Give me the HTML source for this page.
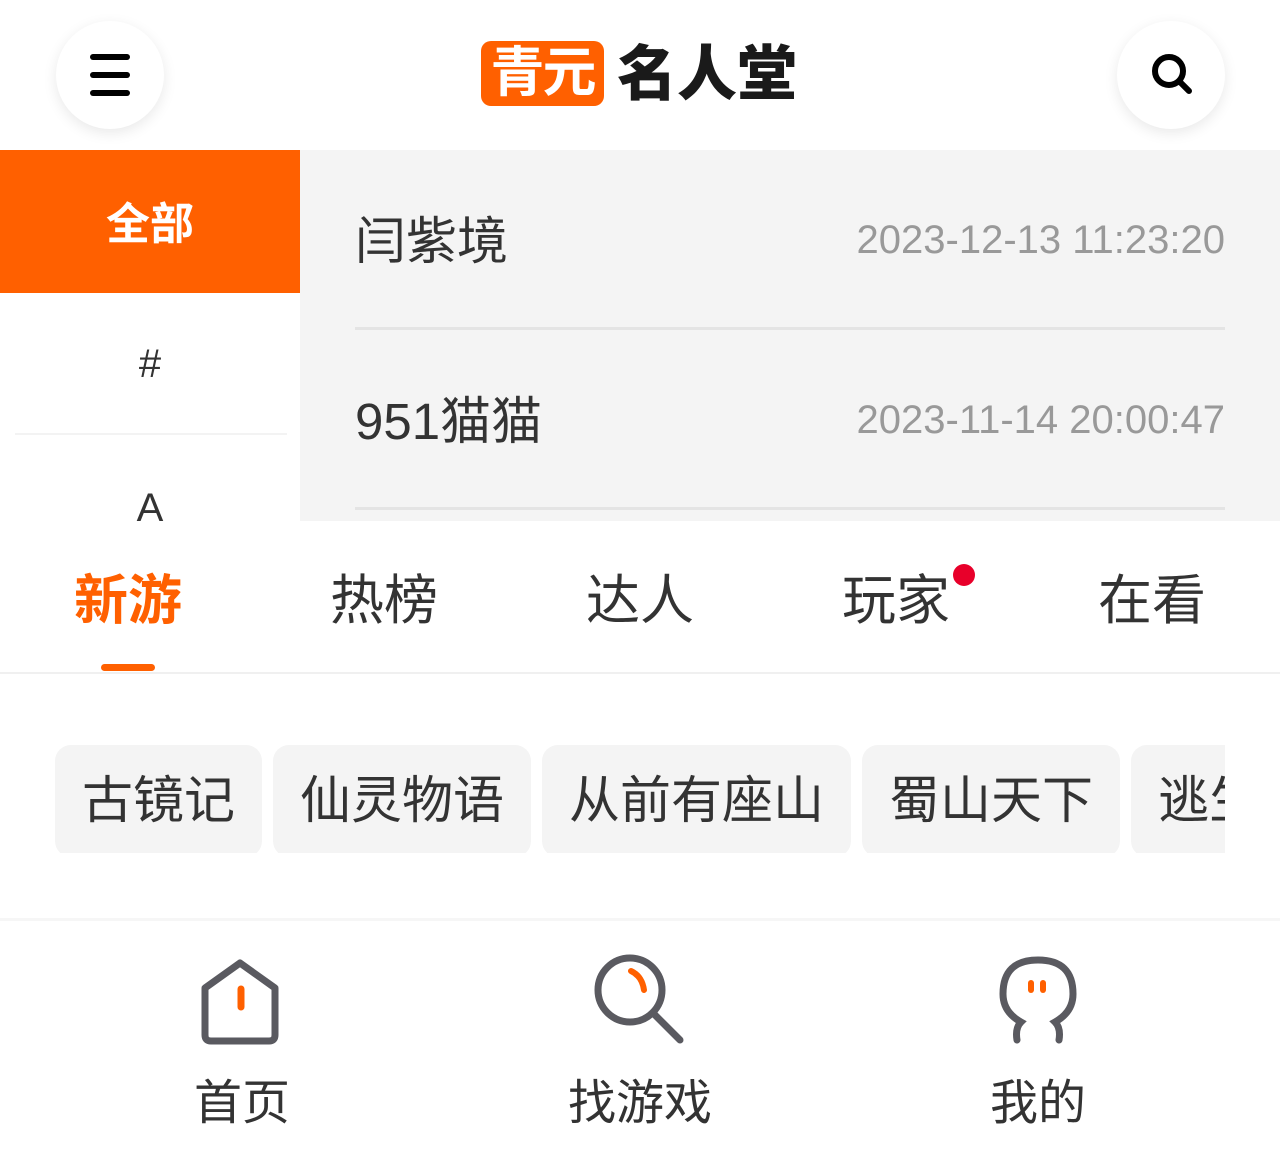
<!DOCTYPE html>
<html><head><meta charset="utf-8"><style>
*{margin:0;padding:0;box-sizing:border-box}
body{width:1280px;height:1167px;background:#fff;font-family:"Liberation Sans","Noto Sans CJK SC",sans-serif;position:relative;overflow:hidden;color:#333}
.abs{position:absolute}
.circ{width:108px;height:108px;border-radius:50%;background:#fff;box-shadow:0 4px 14px rgba(0,0,0,.09)}
.tag{display:inline-block;background:#f4f4f4;border-radius:16px;padding:0 27px;margin-right:11px}
</style></head><body>
<div class="abs circ" style="left:56px;top:21px">
 <div class="abs" style="left:34px;top:33px;width:40px;height:6px;background:#000;border-radius:3px"></div>
 <div class="abs" style="left:34px;top:51px;width:40px;height:6px;background:#000;border-radius:3px"></div>
 <div class="abs" style="left:34px;top:69px;width:40px;height:6px;background:#000;border-radius:3px"></div>
</div>
<div class="abs circ" style="left:1117px;top:21px">
 <svg class="abs" style="left:32px;top:30px" width="46" height="46" viewBox="0 0 46 46"><circle cx="20" cy="20" r="14" fill="none" stroke="#000" stroke-width="6"/><line x1="30" y1="30" x2="40" y2="40" stroke="#000" stroke-width="6" stroke-linecap="round"/></svg>
</div>
<div class="abs" style="left:481px;top:41px;width:123px;height:65px;background:#ff6000;border-radius:10px;color:#fff;font-size:54px;font-weight:bold;line-height:65px;text-align:center;letter-spacing:-2px">青元</div>
<div class="abs" style="left:617px;top:39px;font-size:60px;font-weight:900;line-height:72px;color:#1a1a1a;letter-spacing:0px">名人堂</div>

<div class="abs" style="left:0;top:150px;width:300px;height:143px;background:#ff6000;color:#fff;font-size:44px;font-weight:bold;text-align:center;line-height:150px">全部</div>
<div class="abs" style="left:0;top:293px;width:300px;height:142px;text-align:center;line-height:142px;font-size:40px;color:#333">#</div>
<div class="abs" style="left:15px;top:433px;width:272px;height:2px;background:#f3f3f3"></div>
<div class="abs" style="left:0;top:435px;width:300px;height:86px;text-align:center;line-height:146px;font-size:40px;color:#333;overflow:hidden">A</div>

<div class="abs" style="left:300px;top:150px;width:980px;height:371px;background:#f4f4f4"></div>
<div class="abs" style="left:355px;top:210px;font-size:51px;line-height:64px">闫紫境</div>
<div class="abs" style="right:55px;top:215px;font-size:40px;line-height:50px;color:#999">2023-12-13 11:23:20</div>
<div class="abs" style="left:355px;top:327px;width:870px;height:3px;background:#e4e4e4"></div>
<div class="abs" style="left:355px;top:390px;font-size:51px;line-height:64px">951猫猫</div>
<div class="abs" style="right:55px;top:395px;font-size:40px;line-height:50px;color:#999">2023-11-14 20:00:47</div>
<div class="abs" style="left:355px;top:507px;width:870px;height:3px;background:#e4e4e4"></div>

<div class="abs" style="left:0;top:566px;width:256px;text-align:center;font-size:54px;line-height:70px;color:#ff6000;font-weight:bold">新游</div>
<div class="abs" style="left:101px;top:664px;width:54px;height:7px;background:#ff6000;border-radius:4px"></div>
<div class="abs" style="left:256px;top:566px;width:256px;text-align:center;font-size:54px;line-height:70px">热榜</div>
<div class="abs" style="left:512px;top:566px;width:256px;text-align:center;font-size:54px;line-height:70px">达人</div>
<div class="abs" style="left:768px;top:566px;width:256px;text-align:center;font-size:54px;line-height:70px">玩家</div>
<div class="abs" style="left:953px;top:564px;width:22px;height:22px;border-radius:50%;background:#e8002a"></div>
<div class="abs" style="left:1024px;top:566px;width:256px;text-align:center;font-size:54px;line-height:70px">在看</div>
<div class="abs" style="left:0;top:672px;width:1280px;height:2px;background:#f0f0f0"></div>

<div class="abs" style="left:55px;top:745px;width:1170px;height:108px;overflow:hidden;white-space:nowrap;font-size:51px;line-height:112px">
<span class="tag">古镜记</span><span class="tag">仙灵物语</span><span class="tag">从前有座山</span><span class="tag">蜀山天下</span><span class="tag">逃生游戏</span>
</div>

<div class="abs" style="left:0;top:918px;width:1280px;height:3px;background:#f6f6f6"></div>
<svg class="abs" style="left:195px;top:955px" width="95" height="92" viewBox="0 0 95 92"><path d="M10 33 L45 8 L80 33 L80 80 Q80 86 74 86 L16 86 Q10 86 10 80 Z" fill="none" stroke="#5a5a60" stroke-width="7" stroke-linejoin="round"/><line x1="46" y1="34" x2="46" y2="52" stroke="#ff6000" stroke-width="7" stroke-linecap="round"/></svg>
<div class="abs" style="left:142px;top:1074px;width:200px;text-align:center;font-size:48px;line-height:60px">首页</div>
<svg class="abs" style="left:590px;top:950px" width="100" height="100" viewBox="0 0 100 100"><circle cx="40" cy="40" r="32" fill="none" stroke="#5a5a60" stroke-width="7"/><line x1="64" y1="64" x2="90" y2="90" stroke="#5a5a60" stroke-width="7" stroke-linecap="round"/><path d="M41 21 Q52 26 54 40" fill="none" stroke="#ff6000" stroke-width="6" stroke-linecap="round"/></svg>
<div class="abs" style="left:540px;top:1074px;width:200px;text-align:center;font-size:48px;line-height:60px">找游戏</div>
<svg class="abs" style="left:995px;top:952px" width="90" height="95" viewBox="0 0 90 95"><path d="M22 88 Q20 76 26 70 Q8 60 8 42 Q8 8 43 8 Q78 8 78 42 Q78 60 60 70 Q66 76 64 88" fill="none" stroke="#5a5a60" stroke-width="7" stroke-linecap="round"/><line x1="36" y1="31" x2="36" y2="38" stroke="#ff6000" stroke-width="6" stroke-linecap="round"/><line x1="48" y1="31" x2="48" y2="38" stroke="#ff6000" stroke-width="6" stroke-linecap="round"/></svg>
<div class="abs" style="left:938px;top:1074px;width:200px;text-align:center;font-size:48px;line-height:60px">我的</div>
</body></html>
